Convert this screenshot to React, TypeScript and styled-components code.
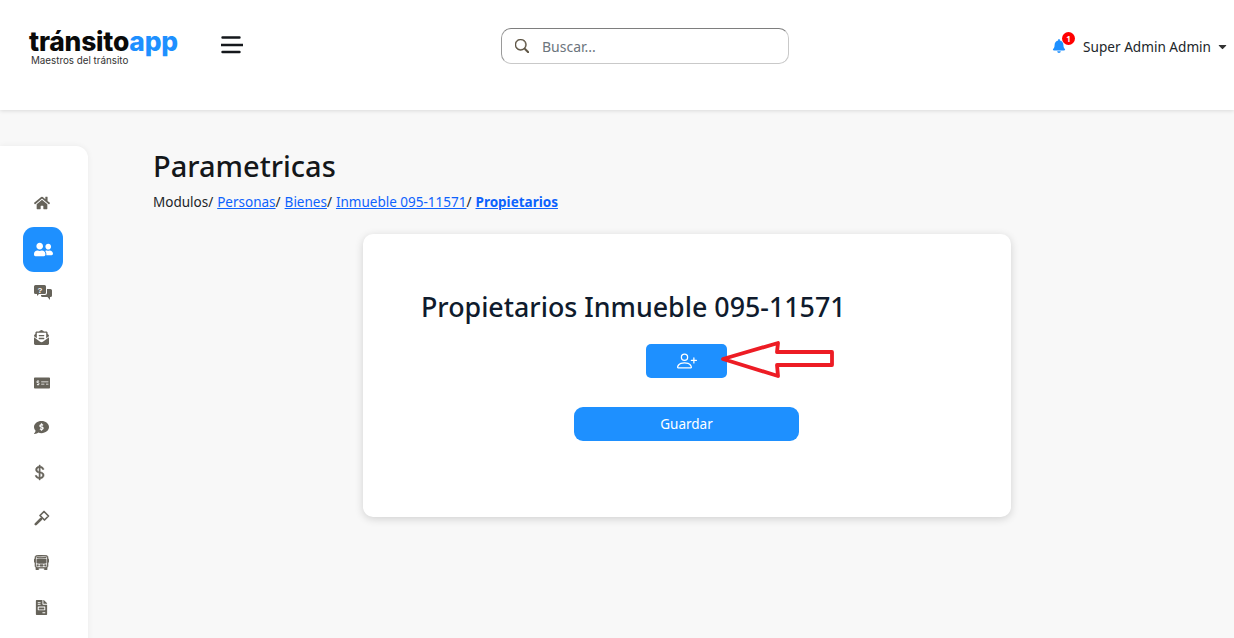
import React from 'react'
import styled, { createGlobalStyle } from 'styled-components'
import {
  FaHome,
  FaUserFriends,
  FaEnvelopeOpenText,
  FaMoneyCheckAlt,
  FaCommentDollar,
  FaFileInvoice,
  FaBell,
  FaCaretDown,
} from 'react-icons/fa'
import { BsPersonPlus, BsCurrencyDollar, BsBusFront, BsSearch } from 'react-icons/bs'

const fontStack = `"Noto Sans", "Open Sans", "Liberation Sans", sans-serif`
const blue = '#1e90ff'
const iconGrey = '#66635a'

const GlobalStyle = createGlobalStyle`
  html, body {
    margin: 0;
    padding: 0;
    height: 100%;
    overflow: hidden;
    background: #f8f8f8;
    font-family: ${fontStack};
  }
  * { box-sizing: border-box; }
`

const Page = styled.div`
  width: 1234px;
  height: 638px;
  display: flex;
  flex-direction: column;
  overflow: hidden;
`

const Header = styled.header`
  height: 110px;
  flex: none;
  background: #fff;
  box-shadow: 0 1px 4px rgba(0, 0, 0, 0.12);
  display: grid;
  grid-template-columns: 501px 288px 1fr;
  align-items: start;
  padding-top: 28px;
`

const Brand = styled.div`
  display: flex;
  align-items: flex-start;
  padding-left: 29px;
`

const Logo = styled.div`
  width: 192px;
  display: flex;
  flex-direction: column;
  gap: 2px;
`

const LogoName = styled.div`
  font-family: Inter, ${fontStack};
  font-weight: 800;
  font-size: 26.4px;
  line-height: 26px;
  letter-spacing: -0.2px;
  color: #0a0a0a;
  white-space: nowrap;

  span {
    color: ${blue};
  }
`

const LogoTag = styled.div`
  font-family: Inter, ${fontStack};
  font-size: 9.8px;
  line-height: 10px;
  margin-left: 2px;
  color: #333;
  white-space: nowrap;
`

const Burger = styled.svg`
  width: 22px;
  height: 20px;
  margin-top: 7px;
`

const SearchBox = styled.div`
  height: 36px;
  border: 1px solid #c9c9c9;
  border-top-color: #7e7e7e;
  border-left-color: #9a9a9a;
  border-radius: 10px;
  display: flex;
  align-items: center;
  gap: 13px;
  padding-left: 13px;
  font-size: 14px;

  svg {
    color: #5a5140;
    stroke: #5a5140;
    stroke-width: 0.6px;
  }
`

const Placeholder = styled.span`
  color: #6c757d;
`

const UserArea = styled.div`
  height: 36px;
  display: flex;
  align-items: center;
  justify-content: flex-end;
  padding-right: 5px;
  font-size: 13.6px;
  color: #212529;
`

const BellWrap = styled.div`
  position: relative;
  display: flex;
  margin-right: 17px;
  color: ${blue};
`

const Badge = styled.span`
  position: absolute;
  top: -7px;
  left: 10px;
  width: 13px;
  height: 13px;
  border-radius: 50%;
  background: #f00;
  color: #fff;
  font-size: 8px;
  font-weight: 700;
  line-height: 13px;
  text-align: center;
`

const Caret = styled(FaCaretDown)`
  margin-left: 5px;
  color: #333;
`

const Body = styled.div`
  flex: 1;
  display: flex;
  min-height: 0;
`

const Sidebar = styled.nav`
  width: 88px;
  height: 520px;
  flex: none;
  margin-top: 36px;
  padding: 34px 0 0 23px;
  background: #fff;
  border-radius: 0 12px 0 0;
  box-shadow: 0 0 6px rgba(0, 0, 0, 0.06);
  display: flex;
  flex-direction: column;
`

const NavItem = styled.div<{ $active?: boolean }>`
  width: 40px;
  height: 45px;
  flex: none;
  display: flex;
  align-items: center;
  justify-content: ${(p) => (p.$active ? 'center' : 'flex-start')};
  padding-left: ${(p) => (p.$active ? '0' : '11px')};
  margin: ${(p) => (p.$active ? '2px 0 -2px' : '0')};
  border-radius: 11px;
  background: ${(p) => (p.$active ? blue : 'transparent')};
  color: ${(p) => (p.$active ? '#fff' : iconGrey)};
`

const DollarIcon = styled(BsCurrencyDollar)`
  margin-left: -3px;
  stroke: currentColor;
  stroke-width: 0.5px;
`

const BusIcon = styled(BsBusFront)`
  stroke: currentColor;
  stroke-width: 0.5px;
`

const Main = styled.main`
  flex: 1;
  padding: 36px 13px 0 65px;
  min-width: 0;
`

const Title = styled.h1`
  margin: 0;
  font-size: 29px;
  line-height: 40px;
  font-weight: 500;
  color: #14171a;
`

const Crumbs = styled.div`
  margin-top: 6px;
  font-size: 13.5px;
  line-height: 20px;
  color: #212529;
  white-space: nowrap;
`

const Crumb = styled.a<{ $current?: boolean }>`
  color: #0d62fd;
  text-decoration: underline;
  font-weight: ${(p) => (p.$current ? 700 : 400)};
  margin-left: 4px;
`

const Card = styled.section`
  position: relative;
  width: 648px;
  height: 283px;
  margin: 22px auto 0;
  padding: 54px 59px 0 58px;
  background: #fff;
  border-radius: 10px;
  box-shadow: 0 2px 8px rgba(0, 0, 0, 0.16);
  display: flex;
  flex-direction: column;
  align-items: center;
`

const CardTitle = styled.h2`
  align-self: flex-start;
  margin: 0;
  font-size: 26.8px;
  line-height: 38px;
  font-weight: 500;
  color: #0f1b2d;
  white-space: nowrap;
`

const AddButton = styled.button`
  width: 81px;
  height: 34px;
  margin-top: 18px;
  border: none;
  border-radius: 5px;
  background: ${blue};
  color: #fff;
  display: flex;
  align-items: center;
  justify-content: center;
`

const SaveButton = styled.button`
  width: 225px;
  height: 34px;
  margin-top: 29px;
  padding: 0;
  border: none;
  border-radius: 9px;
  background: ${blue};
  color: #fff;
  font-family: ${fontStack};
  font-size: 13.5px;
`

const Arrow = styled.svg`
  position: absolute;
  left: 355px;
  top: 104px;
  width: 120px;
  height: 44px;
`

const QuestionChat = () => (
  <svg width="18" height="16" viewBox="0 0 18 16" fill="currentColor">
    <path d="M1.5 0h9A1.5 1.5 0 0 1 12 1.5v6A1.5 1.5 0 0 1 10.5 9H5l-2 2V9H1.5A1.5 1.5 0 0 1 0 7.5v-6A1.5 1.5 0 0 1 1.5 0z" />
    <path d="M13 4h3.5A1.5 1.5 0 0 1 18 5.500v5a1.500 1.500 0 0 1-1.500 1.500H16v3l-2.500-3H8.500A1.500 1.500 0 0 1 7 10.500V10h4a2 2 0 0 0 2-2z" />
    <text x="6" y="7.500" fontSize="8" fontWeight="700" fill="#fff" textAnchor="middle" fontFamily="Liberation Sans">?</text>
  </svg>
)

const GavelOutline = () => (
  <svg width="16" height="16" viewBox="0 0 16 16" fill="none" stroke="currentColor">
    <path d="M10 1.500 14.500 6 10.500 10 6 5.500z" strokeWidth="1.700" strokeLinejoin="round" />
    <path d="M7 9 1.800 14.200" strokeWidth="2.600" strokeLinecap="round" />
  </svg>
)

const navIcons = [
  <FaHome size={16} />,
  <FaUserFriends size={19} />,
  <QuestionChat />,
  <FaEnvelopeOpenText size={15} />,
  <FaMoneyCheckAlt size={16} />,
  <FaCommentDollar size={15} />,
  <DollarIcon size={17} />,
  <GavelOutline />,
  <BusIcon size={15} />,
  <FaFileInvoice size={15} />,
]

export default function App() {
  return (
    <Page>
      <GlobalStyle />
      <Header>
        <Brand>
          <Logo>
            <LogoName>
              tránsito<span>app</span>
            </LogoName>
            <LogoTag>Maestros del tránsito</LogoTag>
          </Logo>
          <Burger viewBox="0 0 22 20">
            <path
              d="M1.500 2.500h17M0.500 10h21M1.500 17h17"
              stroke="#15181c"
              strokeWidth="2.400"
              strokeLinecap="round"
            />
          </Burger>
        </Brand>
        <SearchBox>
          <BsSearch size={14} />
          <Placeholder>Buscar...</Placeholder>
        </SearchBox>
        <UserArea>
          <BellWrap>
            <FaBell size={14} />
            <Badge>1</Badge>
          </BellWrap>
          Super Admin Admin
          <Caret size={13} />
        </UserArea>
      </Header>
      <Body>
        <Sidebar>
          {navIcons.map((icon, i) => (
            <NavItem key={i} $active={i === 1}>
              {icon}
            </NavItem>
          ))}
        </Sidebar>
        <Main>
          <Title>Parametricas</Title>
          <Crumbs>
            Modulos/
            <Crumb>Personas</Crumb>/<Crumb>Bienes</Crumb>/
            <Crumb>Inmueble 095-11571</Crumb>/
            <Crumb $current>Propietarios</Crumb>
          </Crumbs>
          <Card>
            <CardTitle>Propietarios Inmueble 095-11571</CardTitle>
            <AddButton>
              <BsPersonPlus size={20} />
            </AddButton>
            <SaveButton>Guardar</SaveButton>
            <Arrow viewBox="0 0 120 44">
              <path
                d="M5 21 L60 5 L59 14 L114 14 L114 27 L59 27 L60 38 Z"
                fill="none"
                stroke="#ed1c24"
                strokeWidth="3.800"
                strokeLinejoin="round"
              />
            </Arrow>
          </Card>
        </Main>
      </Body>
    </Page>
  )
}
